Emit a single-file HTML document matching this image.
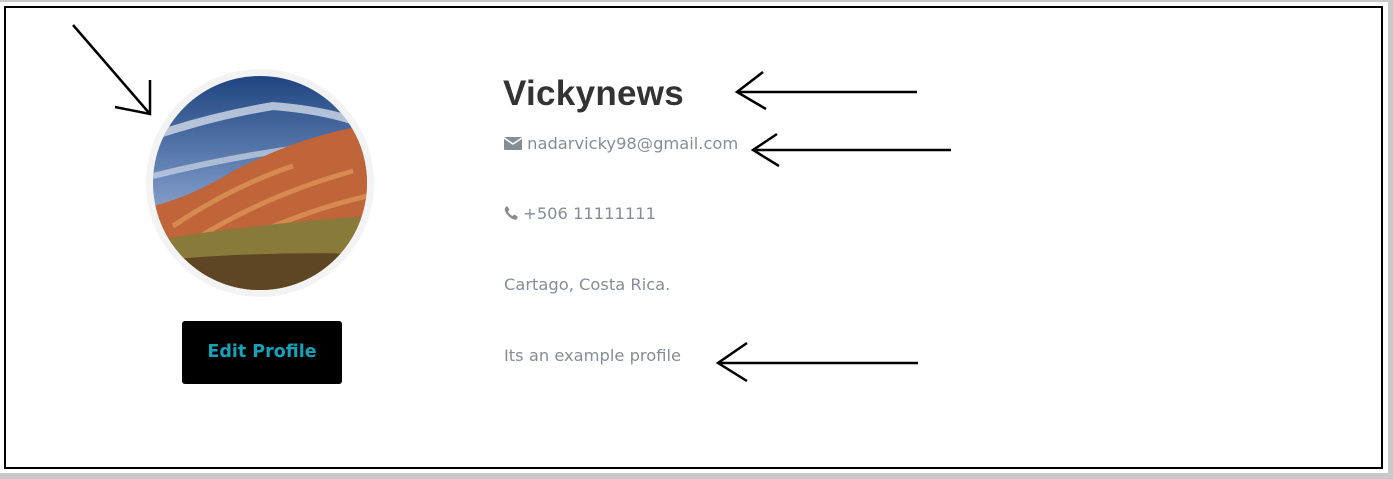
<!DOCTYPE html>
<html><head><meta charset="utf-8"><style>
html,body{margin:0;padding:0;width:1393px;height:479px;overflow:hidden;background:#c9c9c9;font-family:"Liberation Sans",sans-serif;}
.wrap{position:absolute;left:0;top:2px;width:1388px;height:471px;background:#fff;}
.box{position:absolute;left:4px;top:6px;width:1375px;height:459px;border:2px solid #000;background:#fff;}
.ring{position:absolute;left:146px;top:69px;width:228px;height:228px;border-radius:50%;background:#f3f3f3;}
.img{position:absolute;left:153px;top:76px;width:214px;height:214px;border-radius:50%;overflow:hidden;}
.btn{position:absolute;left:182px;top:321px;width:160px;height:63px;background:#000;border-radius:3px;color:#17a2b8;font-weight:bold;line-height:63px;text-align:center;font-family:"DejaVu Sans",sans-serif;font-size:17.5px;}
.t{position:absolute;left:504px;color:#858d96;font-family:"DejaVu Sans",sans-serif;font-size:16.3px;}
h1{position:absolute;left:503px;top:74px;margin:0;font-size:35px;color:#333;font-weight:bold;font-family:"Liberation Sans",sans-serif;letter-spacing:0.3px;}
svg.ar{position:absolute;left:0;top:0;}
</style></head><body>
<div class="wrap"></div>
<div class="box"></div>
<div class="ring"></div>
<div class="img"><svg width="214" height="214" viewBox="0 0 214 214">
<defs><linearGradient id="s" x1="0" y1="0" x2="0" y2="1"><stop offset="0" stop-color="#1f4480"/><stop offset="0.5" stop-color="#6f8dbd"/><stop offset="1" stop-color="#c8d2e0"/></linearGradient></defs>
<rect width="214" height="214" fill="url(#s)"/>
<path d="M0 60 Q60 40 120 30 Q180 35 214 50" stroke="#e6ecf4" stroke-width="8" fill="none" opacity="0.7"/>
<path d="M0 100 Q80 80 160 70" stroke="#dfe6ef" stroke-width="6" fill="none" opacity="0.6"/>
<path d="M0 160 L0 130 Q40 120 80 95 Q130 70 160 62 Q190 52 214 50 L214 214 L0 214Z" fill="#c0643a"/>
<path d="M20 150 Q80 110 140 90 M40 165 Q110 120 200 95 M60 180 Q130 140 214 120" stroke="#e09a5a" stroke-width="5" fill="none" opacity="0.7"/>
<path d="M0 165 Q80 150 214 140 L214 214 L0 214Z" fill="#8a7a3a"/>
<path d="M0 185 Q100 175 214 178 L214 214 L0 214Z" fill="#5e4624"/>
</svg></div>
<div class="btn">Edit Profile</div>
<h1>Vickynews</h1>
<div class="t" style="top:134px"><svg width="18" height="14" viewBox="0 0 18 14" style="vertical-align:-1px"><rect x="0" y="1" width="18" height="13" rx="1" fill="#858d96"/><path d="M0 2 L9 8 L18 2" stroke="#fff" stroke-width="1.5" fill="none"/></svg> nadarvicky98@gmail.com</div>
<div class="t" style="top:204px"><svg width="14" height="14" viewBox="0 0 14 14" style="vertical-align:-1px"><path d="M3 0 L5.5 3.5 L4 5.5 Q6 9 8.5 10 L10.5 8.5 L14 11 L12 14 Q5 13 1 5 Q0 2 3 0Z" fill="#858d96"/></svg> +506 11111111</div>
<div class="t" style="top:275px">Cartago, Costa Rica.</div>
<div class="t" style="top:346px">Its an example profile</div>
<svg class="ar" width="1393" height="479" fill="none" stroke="#000" stroke-width="2.5">
<path d="M73 25 L150 114 M150 80 L150 114 L115 107"/>
<path d="M917 92 L737 92 M763 72 L737 92 L766 109"/>
<path d="M951 150 L753 150 M777 134 L753 150 L779 166"/>
<path d="M918 363 L718 363 M747 343 L718 363 L747 381"/>
</svg>
</body></html>
